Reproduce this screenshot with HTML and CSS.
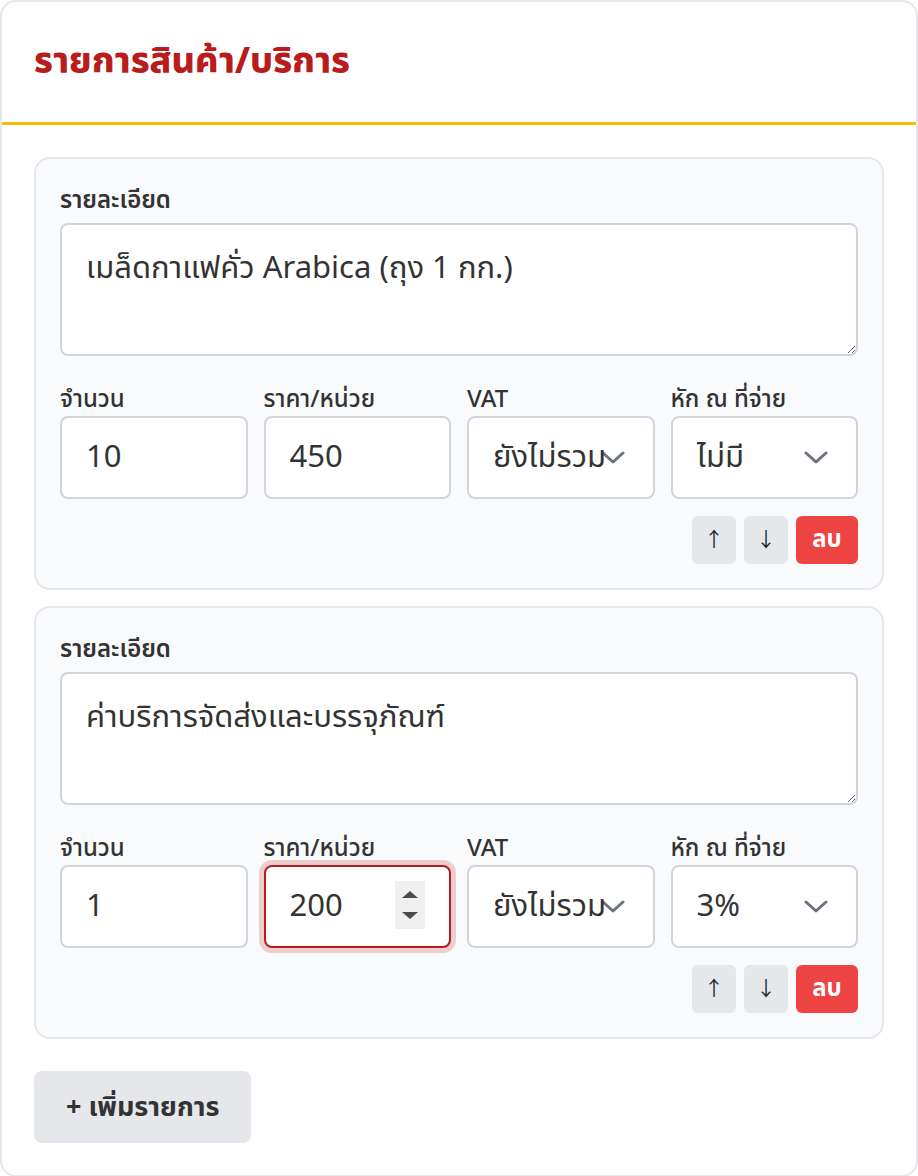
FILE: index.html
```html
<!DOCTYPE html>
<html lang="th">
<head>
<meta charset="utf-8">
<title>รายการสินค้า/บริการ</title>
<link rel="stylesheet" href="styles.css">
</head>
<body>
<div class="card">
  <div class="card-header">
    <h2 class="title">รายการสินค้า/บริการ</h2>
  </div>
  <div class="card-body">
    <div class="item">
      <label class="lbl-main">รายละเอียด</label>
      <textarea class="ta">เมล็ดกาแฟคั่ว Arabica (ถุง 1 กก.)</textarea>
      <div class="grid4">
        <div class="field">
          <label class="lbl">จำนวน</label>
          <input class="inp" type="text" value="10">
        </div>
        <div class="field">
          <label class="lbl">ราคา/หน่วย</label>
          <input class="inp" type="text" value="450">
        </div>
        <div class="field">
          <label class="lbl">VAT</label>
          <div class="sel-wrap">
            <svg class="chev" viewBox="0 0 24 14" width="24" height="14"><path d="M2 2 L12 11 L22 2" fill="none" stroke="#6b7280" stroke-width="3" stroke-linecap="round" stroke-linejoin="round"/></svg>
            <select class="sel"><option>ยังไม่รวม</option></select>
          </div>
        </div>
        <div class="field">
          <label class="lbl">หัก ณ ที่จ่าย</label>
          <div class="sel-wrap">
            <svg class="chev" viewBox="0 0 24 14" width="24" height="14"><path d="M2 2 L12 11 L22 2" fill="none" stroke="#6b7280" stroke-width="3" stroke-linecap="round" stroke-linejoin="round"/></svg>
            <select class="sel"><option>ไม่มี</option></select>
          </div>
        </div>
      </div>
      <div class="actions">
        <button class="btn-sm">↑</button>
        <button class="btn-sm">↓</button>
        <button class="btn-del">ลบ</button>
      </div>
    </div>

    <div class="item">
      <label class="lbl-main">รายละเอียด</label>
      <textarea class="ta">ค่าบริการจัดส่งและบรรจุภัณฑ์</textarea>
      <div class="grid4">
        <div class="field">
          <label class="lbl">จำนวน</label>
          <input class="inp" type="text" value="1">
        </div>
        <div class="field">
          <label class="lbl">ราคา/หน่วย</label>
          <div class="num-wrap">
            <input class="inp inp-focus" type="text" value="200">
            <span class="spin"><span class="tri-up"></span><span class="tri-down"></span></span>
          </div>
        </div>
        <div class="field">
          <label class="lbl">VAT</label>
          <div class="sel-wrap">
            <svg class="chev" viewBox="0 0 24 14" width="24" height="14"><path d="M2 2 L12 11 L22 2" fill="none" stroke="#6b7280" stroke-width="3" stroke-linecap="round" stroke-linejoin="round"/></svg>
            <select class="sel"><option>ยังไม่รวม</option></select>
          </div>
        </div>
        <div class="field">
          <label class="lbl">หัก ณ ที่จ่าย</label>
          <div class="sel-wrap">
            <svg class="chev" viewBox="0 0 24 14" width="24" height="14"><path d="M2 2 L12 11 L22 2" fill="none" stroke="#6b7280" stroke-width="3" stroke-linecap="round" stroke-linejoin="round"/></svg>
            <select class="sel"><option>3%</option></select>
          </div>
        </div>
      </div>
      <div class="actions">
        <button class="btn-sm">↑</button>
        <button class="btn-sm">↓</button>
        <button class="btn-del">ลบ</button>
      </div>
    </div>

    <button class="btn-add">+ เพิ่มรายการ</button>
  </div>
</div>
</body>
</html>
```

FILE: styles.css
```css
* { box-sizing: border-box; }
html, body { margin: 0; padding: 0; background: #ffffff; }
body {
  font-family: "Noto Sans Thai", "Noto Sans", "Noto Sans CJK SC", sans-serif;
  color: #333333;
}
.card {
  width: 918px;
  min-height: 1176px;
  border: 2px solid #e5e7eb;
  border-radius: 16px;
  background: #ffffff;
}
.card-header {
  height: 123px;
  padding: 0 32px;
  display: flex;
  align-items: center;
  border-bottom: 3px solid #fbbc05;
}
.title {
  margin: 0;
  font-size: 36px;
  font-weight: 800;
  color: #b91c1c;
  line-height: 1.3;
}
.card-body {
  padding: 32px;
  display: flex;
  flex-direction: column;
  align-items: flex-start;
}
.item {
  width: 100%;
  background: #f9fafb;
  border: 2px solid #e5e7eb;
  border-radius: 16px;
  padding: 24px;
  margin-bottom: 16px;
  display: flex;
  flex-direction: column;
}
.lbl-main {
  font-size: 24px;
  font-weight: 600;
  line-height: 36px;
  margin-bottom: 4px;
  color: #333;
}
.ta {
  width: 100%;
  height: 133px;
  border: 2px solid #d1d5db;
  border-radius: 8px;
  padding: 21px 24px 19px;
  font-family: inherit;
  font-size: 31px;
  line-height: 46px;
  color: #333;
  background: #fff;
  resize: vertical;
  outline: none;
}
.grid4 {
  display: grid;
  grid-template-columns: repeat(4, 1fr);
  gap: 16px;
  margin-top: 28px;
}
.field { display: flex; flex-direction: column; min-width: 0; }
.lbl {
  font-size: 24px;
  font-weight: 500;
  line-height: 32px;
  color: #333;
}
.inp, .sel {
  width: 100%;
  height: 83px;
  border: 2px solid #d1d5db;
  border-radius: 8px;
  padding: 16px 24px;
  font-family: inherit;
  font-size: 31px;
  color: #333;
  background: #fff;
  outline: none;
}
.sel {
  position: relative;
  z-index: 1;
  appearance: none;
  -webkit-appearance: none;
  padding: 0 24px;
  background: transparent;
}
.sel-wrap {
  position: relative;
  background: #fff;
  border-radius: 8px;
}
.num-wrap { position: relative; }
.chev {
  position: absolute;
  z-index: 0;
  right: 30px;
  top: 35px;
  pointer-events: none;
}
.inp-focus {
  border-color: #b91c1c;
  box-shadow: 0 0 0 5px rgba(185, 28, 28, 0.2);
}
.spin {
  position: absolute;
  right: 26px;
  top: 16px;
  width: 30px;
  height: 48px;
  background: #f0f0f0;
  display: flex;
  flex-direction: column;
  align-items: center;
  justify-content: center;
  gap: 14px;
}
.tri-up {
  width: 0; height: 0;
  border-left: 8px solid transparent;
  border-right: 8px solid transparent;
  border-bottom: 7px solid #4b4b4b;
}
.tri-down {
  width: 0; height: 0;
  border-left: 8px solid transparent;
  border-right: 8px solid transparent;
  border-top: 7px solid #4b4b4b;
}
.actions {
  display: flex;
  justify-content: flex-end;
  gap: 8px;
  margin-top: 17px;
}
.btn-sm, .btn-del {
  height: 48px;
  border: none;
  border-radius: 6px;
  font-family: inherit;
  padding: 0;
}
.btn-sm {
  width: 44px;
  background: #e5e7eb;
  color: #1f2937;
  font-size: 20px;
}
.btn-del {
  width: 62px;
  background: #ef4444;
  color: #fff;
  font-size: 24px;
  font-weight: 700;
}
.btn-add {
  margin-top: 16px;
  height: 72px;
  padding: 0 32px;
  border: none;
  border-radius: 8px;
  background: #e5e7eb;
  color: #333;
  font-family: inherit;
  font-size: 27px;
  font-weight: 700;
}
```
